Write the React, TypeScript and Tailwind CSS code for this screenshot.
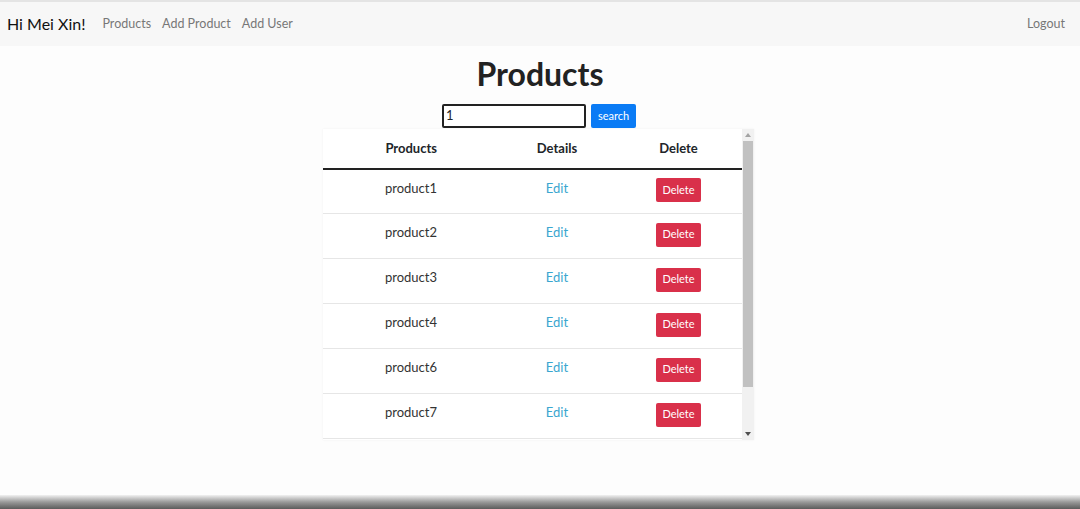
import React from "react";

const products = ["product1", "product2", "product3", "product4", "product6", "product7"];

export default function App() {
  return (
    <div className="relative flex h-[509px] w-[1080px] flex-col overflow-hidden bg-[#fdfdfd] font-['Lato',sans-serif] text-[#212529]">
      {/* Navbar */}
      <nav className="flex h-[46px] items-center border-t-2 border-[#e4e4e4] bg-[#f7f7f7] px-[7px]">
        <span className="text-[16px] text-[#111]">Hi Mei Xin!</span>
        <div className="ml-[17px] flex gap-[11px] text-[12.5px] text-[#777]">
          <span>Products</span>
          <span>Add Product</span>
          <span>Add User</span>
        </div>
        <span className="ml-auto mr-[8px] text-[12.5px] text-[#777]">Logout</span>
      </nav>

      <h1 className="mt-[8px] text-center text-[32px] font-bold leading-[40px] text-[#222]">Products</h1>

      {/* Search */}
      <div className="mt-[10px] flex justify-center gap-[5px] pr-[2px]">
        <div className="flex h-[24px] w-[144px] items-center rounded-[2px] border-2 border-[#222] bg-white px-[2px] text-[13px]">1</div>
        <button className="h-[24px] w-[45px] rounded-[2px] bg-[#0a7bf5] text-[11px] text-white">search</button>
      </div>

      {/* Table */}
      <div className="ml-[323px] mt-px flex h-[311px] w-[431px] bg-white shadow-[0_0_2px_rgba(0,0,0,0.06)]">
        <div className="w-[419px]">
          <div className="grid h-[41px] grid-cols-[118px_196px_105px] items-center border-b-2 border-[#222] text-[13px] font-bold">
            <div className="pr-[4px] text-right">Products</div>
            <div className="pl-9 text-center">Details</div>
            <div className="pr-[22px] text-center">Delete</div>
          </div>
          {products.map((p, i) => (
            <div
              key={p}
              className={`grid grid-cols-[118px_196px_105px] items-center border-b border-[#e6e6e6] text-[13px] ${i === 0 ? "h-[44px]" : "h-[45px]"}`}
            >
              <div className="pr-[4px] pb-[6px] text-right text-[#333]">{p}</div>
              <div className="pl-9 pb-[6px] text-center text-[#3aa6cf]">Edit</div>
              <div className="flex justify-center pr-[22px] pb-[3px]">
                <button className="h-[24px] w-[45px] rounded-[2px] bg-[#d9304a] text-[11px] text-white">Delete</button>
              </div>
            </div>
          ))}
        </div>
        {/* Scrollbar */}
        <div className="flex w-[12px] flex-col items-center bg-[#f1f1f1]">
          <svg width="8" height="12" viewBox="0 0 8 12" className="shrink-0">
            <path d="M1 8 L4 4 L7 8 Z" fill="#a3a3a3" />
          </svg>
          <div className="h-[246px] w-[10px] bg-[#c1c1c1]" />
          <div className="flex-1" />
          <svg width="8" height="12" viewBox="0 0 8 12" className="shrink-0">
            <path d="M1 4 L4 8 L7 4 Z" fill="#505050" />
          </svg>
        </div>
      </div>

      <div className="mt-auto h-[14px] bg-gradient-to-b from-[#f2f2f2] via-[#9a9a9a] to-[#5c5c5c]" />
    </div>
  );
}
